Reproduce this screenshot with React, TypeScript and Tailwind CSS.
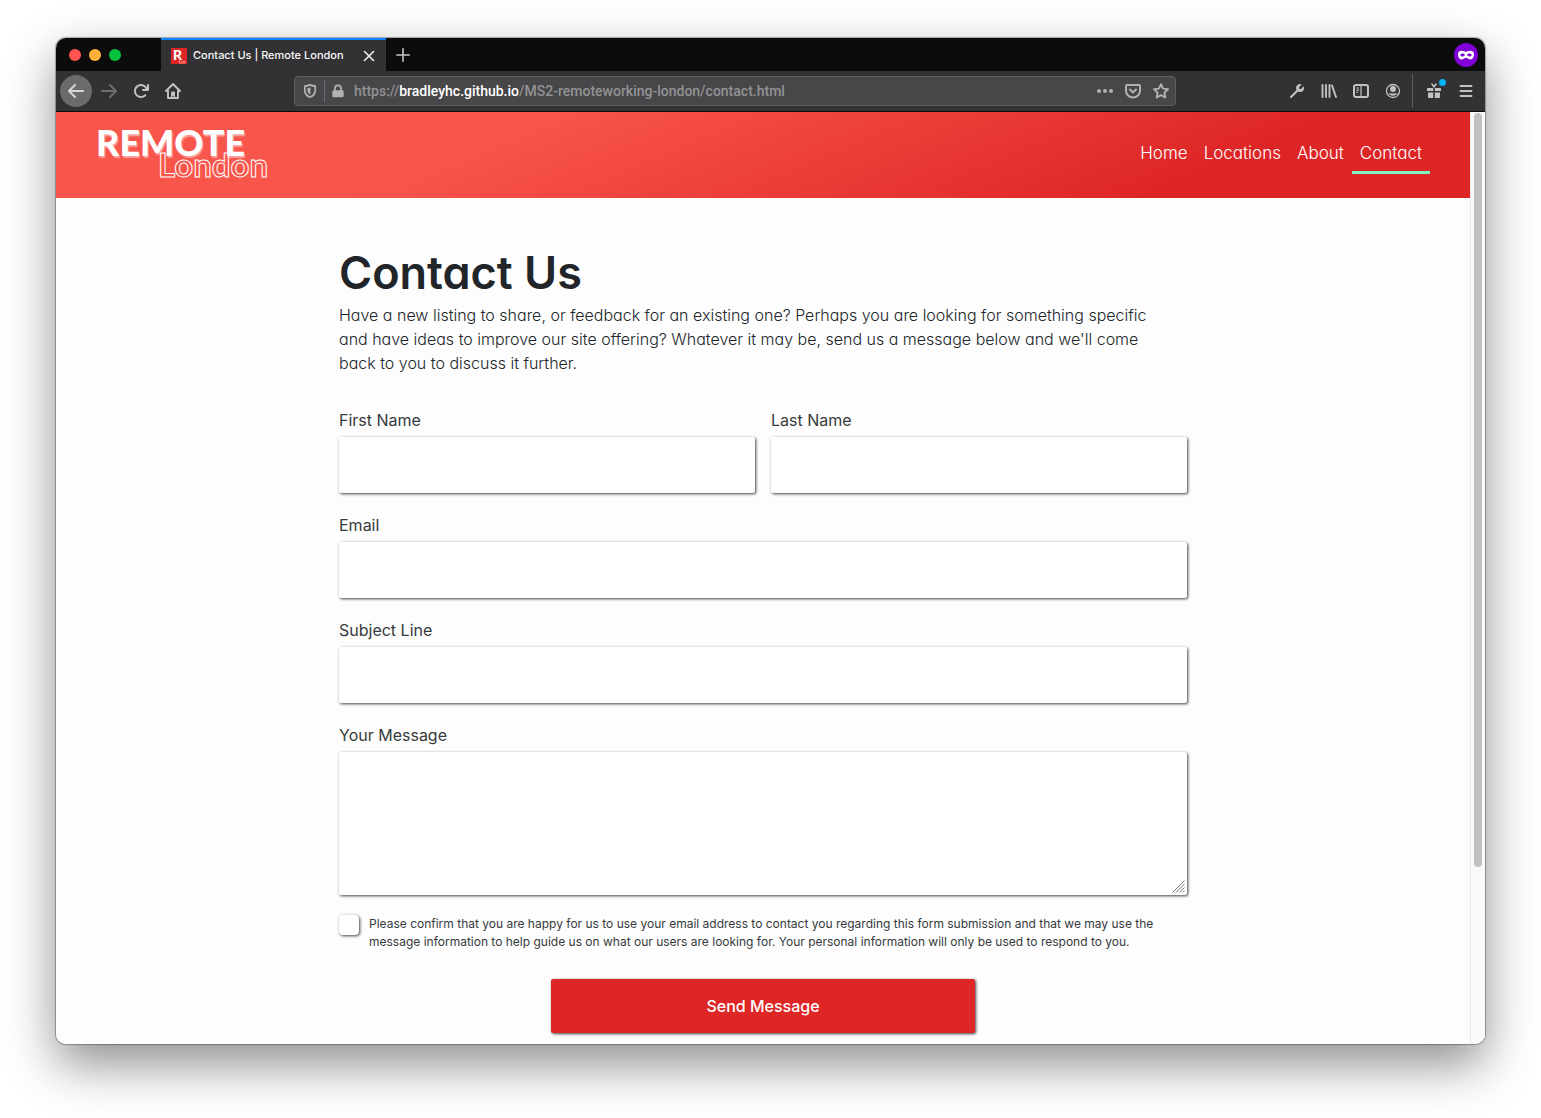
import React from 'react';

const fieldStyle =
  'block w-full rounded-xs bg-white px-3 text-base text-[#373a3c] shadow-[1px_1px_3px_rgba(0,0,0,0.75)] outline-none';

function IconButton({ label, children }: { label: string; children: React.ReactNode }) {
  return (
    <button type="button" aria-label={label} className="flex h-8 w-8 shrink-0 items-center justify-center text-[#c2c2c3]">
      {children}
    </button>
  );
}

function Icon({ children, className = 'h-4 w-4' }: { children: React.ReactNode; className?: string }) {
  return (
    <svg viewBox="0 0 16 16" className={className} fill="currentColor" aria-hidden="true">
      {children}
    </svg>
  );
}

const arrow =
  'M15 7H3.414l4.293-4.293a1 1 0 0 0-1.414-1.414l-6 6a1 1 0 0 0 0 1.414l6 6a1 1 0 0 0 1.414-1.414L3.414 9H15a1 1 0 0 0 0-2z';

function TabBar() {
  return (
    <div className="flex h-[33px] items-stretch bg-[#0c0c0d]">
      <div className="flex w-[105px] shrink-0 items-center gap-2 pl-[13px]">
        <span className="h-3 w-3 rounded-full bg-[#ff5450]" />
        <span className="h-3 w-3 rounded-full bg-[#ffb13c]" />
        <span className="h-3 w-3 rounded-full bg-[#05c13f]" />
      </div>
      <div className="flex w-[225px] shrink-0 items-center border-t-2 border-[#0a84ff] bg-[#323234] pl-2.5 pr-[9px]">
        <svg viewBox="0 0 16 16" className="mr-1.5 h-4 w-4 shrink-0 overflow-visible" aria-hidden="true">
          <rect width="16" height="16" fill="#de2627" />
          <text x="2" y="12" fontFamily="Lato" fontWeight="900" fontSize="14" fill="#fff">R</text>
          <path d="M8.500 10v5h5.500v-1.500h-3.500" fill="none" stroke="#ff9d94" strokeWidth="0.800" />
        </svg>
        <span className="flex-1 whitespace-nowrap text-[11px] font-medium text-[#f9f9fa]">Contact Us | Remote London</span>
        <button type="button" aria-label="Close tab" className="flex h-4 w-4 items-center justify-center text-[#f0f0f0]">
          <svg viewBox="0 0 12 12" className="h-3 w-3" stroke="currentColor" strokeWidth="1.600" strokeLinecap="round" aria-hidden="true">
            <path d="M1.500 1.500l9 9M10.500 1.500l-9 9" />
          </svg>
        </button>
      </div>
      <button type="button" aria-label="New tab" className="flex w-[34px] items-center justify-center text-[#c8c8c8]">
        <svg viewBox="0 0 14 14" className="h-3.5 w-3.5" stroke="currentColor" strokeWidth="1.600" strokeLinecap="round" aria-hidden="true">
          <path d="M7 .8v12.400M.8 7h12.400" />
        </svg>
      </button>
      <div className="flex flex-1 items-center justify-end pr-[7px]">
        <span className="flex h-6 w-6 items-center justify-center rounded-full bg-[#8000d7] text-white">
          <svg viewBox="0 0 16 16" className="h-4 w-4" fill="currentColor" aria-hidden="true">
            <path
              fillRule="evenodd"
              d="M3.500 3.800c1.600 0 3 .5 4.500 1.200 1.500-.7 2.900-1.200 4.500-1.200 2.300 0 3.500 1.200 3.500 3.600 0 3-1.700 5-4 5-1.800 0-2.600-1.600-4-1.600s-2.200 1.600-4 1.600c-2.300 0-4-2-4-5 0-2.400 1.200-3.600 3.500-3.600zM4.600 6.400c-1.200 0-2 .7-2.400 1.500.6 1 1.500 1.500 2.500 1.500s1.900-.5 2.300-1.300c-.4-1-1.200-1.700-2.400-1.700zM11.400 6.400c-1.200 0-2 .7-2.400 1.700.4.800 1.300 1.300 2.300 1.300s1.900-.5 2.500-1.500c-.4-.8-1.200-1.500-2.400-1.500z"
            />
          </svg>
        </span>
      </div>
    </div>
  );
}

function AddressBar() {
  return (
    <div className="flex h-[30px] min-w-0 flex-1 items-center rounded-sm border border-[#5e5e60] bg-[#474749] text-[#b1b1b3]">
      <span className="flex w-[29px] shrink-0 justify-center">
        <Icon className="h-3.5 w-3.5">
          <path d="M8 1C6 1.900 4 2.300 2 2.400v4.200C2 10.500 4 13.600 8 15.100c4-1.500 6-4.600 6-8.500V2.400C12 2.300 10 1.900 8 1z" fill="none" stroke="currentColor" strokeWidth="2" strokeLinejoin="round" />
          <path d="M8.500 4c-1 .4-2.500.7-3.500.8v2c0 2.200 1 4 3.500 5.100z" />
        </Icon>
      </span>
      <span className="h-[22px] w-px bg-[#696a70]" />
      <span className="flex w-[26px] shrink-0 justify-center">
        <Icon className="h-3.5 w-3.5">
          <path d="M3.500 7V5a4.500 4.500 0 0 1 9 0v2h.5a1.500 1.500 0 0 1 1.500 1.500v5A1.500 1.500 0 0 1 13 15H3a1.500 1.500 0 0 1-1.500-1.500v-5A1.500 1.500 0 0 1 3 7zM5.500 7h5V5a2.500 2.500 0 0 0-5 0z" fillRule="evenodd" />
        </Icon>
      </span>
      <span className="min-w-0 flex-1 overflow-hidden whitespace-nowrap pl-[3px] font-[Roboto,sans-serif] text-[14px] font-medium leading-5 text-[#929294]">
        https://<span className="text-white">bradleyhc.github.io</span>/MS2-remoteworking-london/contact.html
      </span>
      <div className="flex shrink-0 items-center gap-3 pr-1.5">
        <button type="button" aria-label="Page actions" className="h-4 w-4">
          <Icon>
            <circle cx="2" cy="8" r="2" />
            <circle cx="8" cy="8" r="2" />
            <circle cx="14" cy="8" r="2" />
          </Icon>
        </button>
        <button type="button" aria-label="Save to Pocket" className="h-4 w-4">
          <Icon>
            <g fill="none" stroke="currentColor" strokeWidth="2" strokeLinecap="round" strokeLinejoin="round">
              <path d="M2 2h12a1 1 0 0 1 1 1v4.500a7 7 0 0 1-14 0V3a1 1 0 0 1 1-1z" />
              <path d="M5 6.500l3 3 3-3" />
            </g>
          </Icon>
        </button>
        <button type="button" aria-label="Bookmark this page" className="h-4 w-4">
          <Icon>
            <path d="M8 1.200l2.100 4.400 4.900.6-3.600 3.400.9 4.900L8 12.100l-4.300 2.400.9-4.900L1 6.200l4.900-.6z" fill="none" stroke="currentColor" strokeWidth="1.900" strokeLinejoin="round" />
          </Icon>
        </button>
      </div>
    </div>
  );
}

function Toolbar() {
  return (
    <div className="flex h-[41px] items-center border-b border-[#0c0c0d] bg-[#323234] pl-1 pr-[3px]">
      <button type="button" aria-label="Back" className="mr-px flex h-8 w-8 shrink-0 items-center justify-center rounded-full bg-[#6b6b6c] text-[#d6d6d6]">
        <Icon><path d={arrow} /></Icon>
      </button>
      <IconButton label="Forward">
        <Icon className="h-4 w-4 rotate-180 text-[#6f6f71]"><path d={arrow} /></Icon>
      </IconButton>
      <IconButton label="Reload">
        <Icon><path d="M15 1a1 1 0 0 0-1 1v2.418A6.995 6.995 0 1 0 8 15a6.954 6.954 0 0 0 4.950-2.050 1 1 0 0 0-1.414-1.414A5.019 5.019 0 1 1 12.549 6H10a1 1 0 0 0 0 2h5a1 1 0 0 0 1-1V2a1 1 0 0 0-1-1z" /></Icon>
      </IconButton>
      <IconButton label="Home">
        <Icon>
          <path d="M1 8l7-7 7 7M3 7.500V15h10V7.500" fill="none" stroke="currentColor" strokeWidth="1.900" strokeLinecap="round" strokeLinejoin="round" />
          <path d="M6 15V9.500a1 1 0 0 1 1-1h2a1 1 0 0 1 1 1V15H8.800v-2H7.500v2z" />
        </Icon>
      </IconButton>
      <div className="w-[105px]" />
      <AddressBar />
      <div className="w-[105px]" />
      <IconButton label="Developer tools">
        <Icon><path d="M14.555 3.200l-2.434 2.436a1.243 1.243 0 1 1-1.757-1.757L12.800 1.445A3.956 3.956 0 0 0 11 1a3.976 3.976 0 0 0-3.434 6.020l-6.273 6.273a1 1 0 1 0 1.414 1.414L8.980 8.434A3.960 3.960 0 0 0 11 9a4 4 0 0 0 4-4 3.956 3.956 0 0 0-.445-1.800z" /></Icon>
      </IconButton>
      <IconButton label="Library">
        <Icon>
          <path d="M1.500 2v12M5 2v12M8.500 2v12M11 2.500L15 14" fill="none" stroke="currentColor" strokeWidth="1.900" strokeLinecap="round" />
        </Icon>
      </IconButton>
      <IconButton label="Sidebars">
        <Icon>
          <rect x="1" y="2" width="14" height="12" rx="2" fill="none" stroke="currentColor" strokeWidth="2" />
          <path d="M8 2v12M3.500 5h2.500M3.500 7.200h2.500M3.500 9.400h1.500" fill="none" stroke="currentColor" strokeWidth="1.200" />
        </Icon>
      </IconButton>
      <IconButton label="Account">
        <Icon>
          <circle cx="8" cy="8" r="6.500" fill="none" stroke="currentColor" strokeWidth="1.300" />
          <circle cx="8" cy="6" r="3" />
          <path d="M3.400 9.800c1 .2 1.700.6 2.600.6h4c.9 0 1.600-.4 2.600-.6a5 5 0 0 1-9.200 0z" />
        </Icon>
      </IconButton>
      <span className="ml-[3px] mr-[5px] h-[34px] w-px shrink-0 bg-[#5c5c5e]" />
      <IconButton label="What's new">
        <span className="relative">
          <Icon>
            <path d="M1.500 5H7.200v3H1V5.500a.5.500 0 0 1 .5-.5zM8.800 5h5.700a.5.500 0 0 1 .5.500V8H8.800zM2 9.500h5.200V15H3a1 1 0 0 1-1-1zM8.800 9.500H14V14a1 1 0 0 1-1 1H8.800z" />
            <path d="M8 3.800L6 1.200M8 3.800l2-2.600" stroke="currentColor" strokeWidth="1.600" strokeLinecap="round" />
          </Icon>
          <span className="absolute -right-1 -top-1 h-[7px] w-[7px] rounded-full bg-[#00b3f4]" />
        </span>
      </IconButton>
      <IconButton label="Menu">
        <Icon><path d="M2.500 3h11M2.500 8h11M2.500 13h11" stroke="currentColor" strokeWidth="1.900" strokeLinecap="round" /></Icon>
      </IconButton>
    </div>
  );
}

function SiteHeader() {
  const links = ['Home', 'Locations', 'About'];
  return (
    <header className="flex h-[86px] items-center justify-between bg-[linear-gradient(157deg,#f9564b_30%,#de2526_80%)] pl-10 pr-10">
      <a href="#home" className="mb-1 flex flex-col font-[Lato,sans-serif] text-white">
        <span className="text-[36px] font-black leading-7 [text-shadow:1px_2px_1px_rgba(255,255,255,0.45)]">REMOTE</span>
        <span className="-mt-1.5 ml-[62px] text-[33px] font-bold leading-7 text-transparent [-webkit-text-stroke:1px_white]">London</span>
      </a>
      <nav className="mb-0.5 flex text-[17px] font-light leading-6 text-white [font-feature-settings:'cv11']">
        {links.map((l) => (
          <a key={l} href={`#${l.toLowerCase()}`} className="border-b-[3px] border-transparent px-2 py-1.5">
            {l}
          </a>
        ))}
        <a href="#contact" aria-current="page" className="border-b-[3px] border-[#7df5bd] px-2 py-1.5">
          Contact
        </a>
      </nav>
    </header>
  );
}

function Field({ id, label, type = 'text' }: { id: string; label: string; type?: string }) {
  return (
    <div className="min-w-0 flex-1">
      <label htmlFor={id} className="mb-[5px] block text-base text-[#373a3c]">
        {label}
      </label>
      <input id={id} type={type} className={`h-14 ${fieldStyle}`} />
    </div>
  );
}

function ContactForm() {
  return (
    <form className="mt-[33px] flex flex-col gap-5">
      <div className="flex gap-4">
        <Field id="first-name" label="First Name" />
        <Field id="last-name" label="Last Name" />
      </div>
      <Field id="email" label="Email" type="email" />
      <Field id="subject" label="Subject Line" />
      <div>
        <label htmlFor="message" className="mb-[5px] block text-base text-[#373a3c]">
          Your Message
        </label>
        <div className="relative">
          <textarea id="message" className={`h-[143px] resize-none py-2 ${fieldStyle}`} />
          <svg viewBox="0 0 13 13" className="pointer-events-none absolute bottom-0.5 right-0.5 h-[13px] w-[13px]" stroke="#777" strokeWidth="1" aria-hidden="true">
            <path d="M0.500 12.500l12-12M4 12.500l8.500-8.500M7.500 12.500l5-5M10.500 12.500l2-2" />
          </svg>
        </div>
      </div>
      <div className="flex items-start gap-2.5">
        <input
          id="consent"
          type="checkbox"
          className="h-5 w-5 shrink-0 appearance-none rounded-sm bg-white shadow-[1px_1px_3px_rgba(0,0,0,0.75)] checked:bg-[#de2627]"
        />
        <label htmlFor="consent" className="text-[12px] leading-[18px] text-[#373a3c]">
          Please confirm that you are happy for us to use your email address to contact you regarding this form submission and that we may use the message information to help guide us on what our users are looking for. Your personal information will only be used to respond to you.
        </label>
      </div>
      <button
        type="submit"
        className="mt-2 h-[54px] w-1/2 self-center rounded-xs bg-[#de2627] text-base font-medium text-white shadow-[1px_1px_3px_rgba(0,0,0,0.75)]"
      >
        Send Message
      </button>
    </form>
  );
}

export default function App() {
  return (
    <div className="min-h-screen bg-white px-14 pb-[74px] pt-[38px] font-[Inter,sans-serif]">
      <div className="overflow-hidden rounded-[10px] shadow-[0_0_1px_1px_rgba(0,0,0,0.3),0_20px_50px_rgba(0,0,0,0.45)]">
        <TabBar />
        <Toolbar />
        <div className="flex bg-[#fdfdfd]">
          <div className="min-w-0 flex-1">
            <SiteHeader />
            <main className="mx-auto max-w-[848px] pb-[11px] pt-12 text-[#212529]">
              <h1 className="text-[45px] font-semibold leading-[54px] [font-feature-settings:'cv11']">Contact Us</h1>
              <p className="mt-[3px] max-w-[832px] text-[16px] font-light leading-6 [font-feature-settings:'cv11']">
                Have a new listing to share, or feedback for an existing one? Perhaps you are looking for something specific and have ideas to improve our site offering? Whatever it may be, send us a message below and we'll come back to you to discuss it further.
              </p>
              <ContactForm />
            </main>
          </div>
          <div className="w-[15px] shrink-0 border-l border-[#e8e8e8] bg-[#fafafa] pl-[3px] pt-px">
            <div className="h-[81%] w-2 rounded-full bg-[#c1c1c1]" />
          </div>
        </div>
      </div>
    </div>
  );
}
